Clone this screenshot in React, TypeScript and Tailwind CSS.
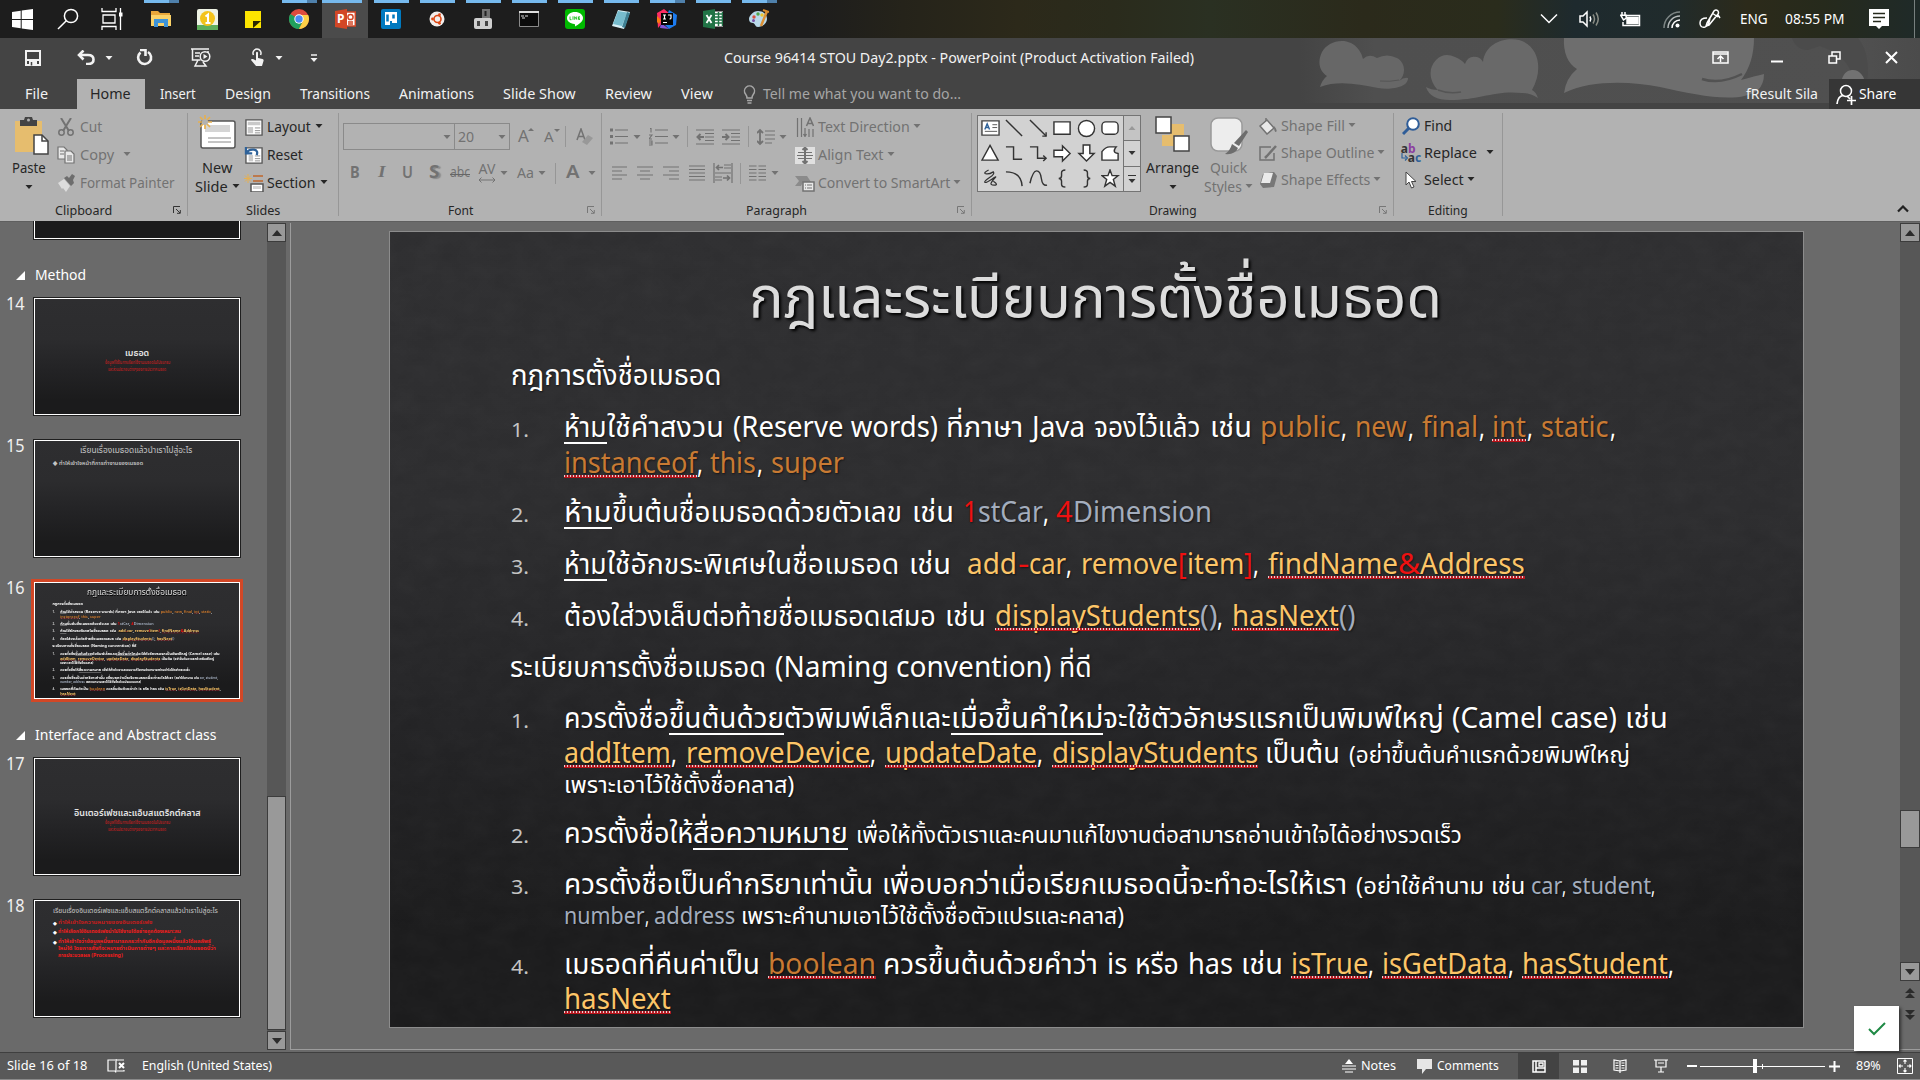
import React, { useLayoutEffect, useRef, useState } from "react";

type Kids = { children?: React.ReactNode };

/* Text condensed or stretched to a fixed advance width. */
function Fit({ w, className = "", children }: { w: number; className?: string } & Kids) {
  const ref = useRef<HTMLSpanElement>(null);
  const [k, setK] = useState(1);
  useLayoutEffect(() => {
    const n = ref.current?.offsetWidth ?? 0;
    if (n > 0) setK(w / n);
  }, [w, children]);
  return (
    <span className={"inline-block shrink-0 whitespace-pre " + className} style={{ width: w }}>
      <span ref={ref} className="inline-block origin-left" style={{ transform: `translateY(-1px) scaleX(${k})` }}>
        {children}
      </span>
    </span>
  );
}

function Caret({ className = "" }: { className?: string }) {
  return (
    <svg className={"shrink-0 " + className} width="8" height="4" viewBox="0 0 8 4" fill="currentColor">
      <path d="M0.5 0h7L4 4z" />
    </svg>
  );
}

function Ico({ w, h, vw, vh, className = "", children }: { w: number; h: number; vw?: number; vh?: number; className?: string } & Kids) {
  return (
    <svg className={"shrink-0 " + className} width={w} height={h} viewBox={`0 0 ${vw ?? w} ${vh ?? h}`} fill="none" stroke="currentColor" strokeWidth="1.5">
      {children}
    </svg>
  );
}

/* ---------------------------------------------------------------- taskbar */

function Task({ bar, active, children }: { bar?: "one" | "many"; active?: boolean } & Kids) {
  return (
    <div className={"relative flex h-[38px] w-[46px] shrink-0 items-center justify-center " + (active ? "bg-[#4b4b4b]" : "")}>
      {bar && (
        <div className={"absolute top-0 flex h-[3px] " + (active ? "left-0 w-[40px]" : "left-[6px] w-[35px]")}>
          <div className="h-full flex-1 bg-[#76b9ed]" />
          {bar === "many" && <div className="h-full w-[10px] bg-[#4f80ab]" />}
        </div>
      )}
      {children}
    </div>
  );
}

function Taskbar() {
  return (
    <div className="flex h-[38px] shrink-0 items-center bg-[linear-gradient(90deg,#1d1d1d_0%,#1d1d1d_42%,#25231a_47%,#2c291a_53%,#2a2b1c_58%,#2a3022_63%,#2b2a1b_71%,#2a2c1c_78%,#1e2a2e_82%,#202b2c_87%,#2c2a1a_91%,#262a1c_95%,#1f2a29_100%)] text-white">
      <div className="flex w-[45px] justify-center">
        <Ico w={21} h={21} className="text-white">
          <path stroke="none" fill="currentColor" d="M0 3l8.7-1.2v8.3H0zM9.7 1.6L21 0v10.1H9.7zM0 11h8.7v8.2L0 18zM9.7 11H21v10L9.7 19.4z" />
        </Ico>
      </div>
      <div className="flex w-[45px] justify-center">
        <Ico w={22} h={22}><circle cx="14" cy="8" r="6.6" /><path d="M9.3 12.7L1 21" /></Ico>
      </div>
      <div className="mr-1 flex w-[44px] justify-center">
        <Ico w={22} h={22}><path d="M1 0v3.5h14V0M1 22v-3.5h14V22M2 7h12v8H2zM19.5 0v22" strokeWidth="1.3" /><path d="M18 6.5h3.5" strokeWidth="4" /></Ico>
      </div>
      <Task bar="many">
        <Ico w={20} h={18}><g stroke="none"><path fill="#e9a73a" d="M0 1h7l2 2h10v13H0z" /><path fill="#fbd268" d="M0 5h20v11H0z" /><path fill="#3f94d8" d="M3 9h14v8h-4v-4H7v4H3z" /></g></Ico>
      </Task>
      <Task>
        <Ico w={21} h={21}><g stroke="none"><rect width="21" height="21" rx="2" fill="#eef3e4" /><path d="M0 16h21v5H0z" fill="#5fae5c" /><circle cx="10.5" cy="9.5" r="7.5" fill="#f3c31b" /></g><path d="M8.5 7.5l2.500-2v8.500M8.500 14h5" stroke="#fff" strokeWidth="2" /></Ico>
      </Task>
      <Task>
        <Ico w={16} h={17}><path stroke="none" fill="#fde500" d="M0 0h16v17H0z" /><path stroke="none" fill="#2a2700" d="M8 17v-7h8z" /></Ico>
      </Task>
      <Task bar="many">
        <Ico w={20} h={20}><g stroke="none"><circle cx="10" cy="10" r="10" fill="#dd4b3e" /><path fill="#20a05e" d="M10 10L1.300 5A10 10 0 0 0 10 20l4-8z" /><path fill="#fdd046" d="M10 6h9.200A10 10 0 0 1 10 20l4-8z" /><circle cx="10" cy="10" r="4.700" fill="#fff" /><circle cx="10" cy="10" r="3.700" fill="#4a8af4" /></g></Ico>
      </Task>
      <Task bar="one" active>
        <Ico w={21} h={20}><path stroke="none" fill="#fff" d="M11 3h9v14h-9z" /><path d="M11 3h9.300v14H11M13 13h5M13 15h5" stroke="#d24726" /><circle cx="15.500" cy="8" r="2.600" stroke="#d24726" /><path stroke="none" fill="#d24726" d="M0 2l12-2v20L0 18z" /></Ico>
        <span className="absolute top-[11px] left-[15px] font-['Noto_Sans'] text-[12px] leading-4 font-bold">P</span>
      </Task>
      <Task bar="one">
        <Ico w={20} h={20}><rect width="20" height="20" rx="2" fill="#0079bf" stroke="none" /><path stroke="none" fill="#fff" d="M4 3h12v11h-5v-2H9v4H4z" /><path d="M6.500 5.500v7M12.500 5.500v4" stroke="#0079bf" strokeWidth="2.500" /></Ico>
      </Task>
      <Task bar="one">
        <Ico w={16} h={16}><circle cx="8" cy="8" r="7.500" fill="#f3efed" stroke="none" /><circle cx="8.500" cy="8" r="3.500" stroke="#dd4814" strokeWidth="1.600" /><g fill="#dd4814" stroke="none"><circle cx="3.500" cy="8" r="1.400" /><circle cx="10.500" cy="3.700" r="1.400" /><circle cx="10.500" cy="12.300" r="1.400" /></g></Ico>
      </Task>
      <Task bar="one">
        <Ico w={18} h={20}><g stroke="none"><path fill="#737373" d="M8 0h8v10H8z" /><path fill="#222" d="M10.500 2h2v5h-2z" /><rect y="9" width="18" height="11" rx="2" fill="#cfcfcf" /><path fill="#454545" d="M3 12h3v5H3zM11 12h3v5h-3z" /></g></Ico>
      </Task>
      <Task bar="one">
        <Ico w={20} h={16}><path d="M.5.500h19v15H.5z" fill="#0b0b0b" stroke="#8a8a8a" strokeWidth="1" /><path d="M0 1h20" stroke="#ddd" strokeWidth="2" /><path d="M2 5h3M6 5h3M3 7h3" stroke="#ddd" strokeWidth="1" /></Ico>
      </Task>
      <Task bar="one">
        <Ico w={20} h={20}><rect width="20" height="20" rx="3" fill="#00b900" stroke="none" /><path stroke="none" fill="#fff" d="M10 3c4.500 0 8 2.700 8 6 0 4-5 6.500-8 8.500 0-1 .4-2-.5-2.500C5 14.500 2 12.400 2 9c0-3.300 3.500-6 8-6z" /><path d="M5 7.500v3.200h1.500M8 7.300v3.500M9.700 10.800V7.700l2 2.700V7.500M15 7.800h-1.500v2.700H15M13.500 9.200H15" stroke="#00b900" strokeWidth=".8" /></Ico>
      </Task>
      <Task bar="one">
        <Ico w={18} h={19}><g stroke="none"><path fill="#d9f0f6" d="M6 0l12 2-6 17L0 16z" /><path fill="#77bccd" d="M6 1l9 1.500L10 16 1 14z" /><path fill="#3f8194" d="M15 2l3 1-5 15-3-1z" /></g></Ico>
      </Task>
      <Task bar="many">
        <Ico w={20} h={20}><g stroke="none"><path fill="#fe2d63" d="M0 4l7-4 6 5-7 8-5 6z" /><path fill="#f97a12" d="M0 7l4 4-2 4-2-2z" /><path fill="#1c7bef" d="M12 1l8 5-1 10-7 4-5-5z" /><path fill="#8054d8" d="M4 14l8 6-9-1z" /><path fill="#060606" d="M4 4h12v12H4z" /></g><path d="M6 6h3M7.500 6v4M6 10h3M11 6h3v3q0 1-1.500 1M6 13.500h4" stroke="#fff" strokeWidth="1.200" /></Ico>
      </Task>
      <Task bar="one">
        <Ico w={20} h={20}><path stroke="none" fill="#fff" d="M11 2.500h9v15h-9z" /><path d="M12 5h7M12 8h7M12 11h7M12 14h7M15.500 3v14M19.500 3v14" stroke="#217346" /><path stroke="none" fill="#217346" d="M0 2l12-2v20L0 18z" /><path d="M3.500 6l5 8M8.500 6l-5 8" stroke="#fff" strokeWidth="1.800" /></Ico>
      </Task>
      <Task bar="many">
        <Ico w={20} h={20}><g stroke="none"><path fill="#b9d9ea" d="M9 2c6 0 9 4 9 8s-4 8-9 8c-3 0-3-4-5-4s-4-1-4-4 4-8 9-8z" /><circle cx="5" cy="8" r="1.700" fill="#d94f3d" /><circle cx="9" cy="5" r="1.700" fill="#50a54b" /><circle cx="13" cy="6" r="1.700" fill="#edc52c" /><circle cx="4.500" cy="11.500" r="1.500" fill="#7550a5" /></g><path d="M18 2l-6 15" stroke="#db9136" strokeWidth="2.500" /><path d="M14 1l6 2" stroke="#d68a2c" strokeWidth="2" /></Ico>
      </Task>

      <div className="ml-auto flex items-center">
        <Ico w={18} h={12} className="mr-[21px]"><path d="M1 1.500l8 8 8-8" /></Ico>
        <Ico w={22} h={18} className="mr-[19px]"><path d="M1 6h3l4-4v14l-4-4H1z" /><path d="M11 6.500q1.500 2.500 0 5" /><path d="M14 4.500q3 4.500 0 9M17 2.500q4.500 6.500 0 13" stroke="#8a8d85" /></Ico>
        <Ico w={21} h={15} className="mr-[22px]"><path d="M5 3.500h14.500v10H3V10M2 0v3M5 0v3M.7 3.200h5.500V6L3.500 8z" /><path d="M7 5.500h11v6H7z" fill="currentColor" /></Ico>
        <Ico w={17} h={17} className="mr-[19px]"><path d="M1 17A16 16 0 0 1 17 1" stroke="#7d8685" /><path d="M5 17A12 12 0 0 1 17 5" stroke="#b7bcbc" /><path d="M9 17a8 8 0 0 1 8-8" /><circle cx="14.500" cy="14.500" r="2" fill="currentColor" stroke="none" /></Ico>
        <Ico w={22} h={20} className="mr-[19px]"><path d="M8 14L15 2q2-2 4 0 1 2 0 3L10 16l-3 1zM13 4l6 4M8 9q-7 0-7 5t5 4q4-1 5-9M19 6l2 3" /></Ico>
        <Fit w={28} className="mt-[2px] mr-[17px] text-[14px] leading-5">ENG</Fit>
        <Fit w={60} className="mt-[2px] mr-[24px] text-[14px] leading-5">08:55 PM</Fit>
        <Ico w={20} h={20} className="mr-[25px]"><path stroke="none" fill="#fff" d="M0 0h20v17h-7l-3 3-3-3H0z" /><path d="M4 4.500h12M4 8.500h12M4 12.500h8" stroke="#262a1c" /></Ico>
        <div className="mr-[5px] h-[38px] w-px bg-[#77807f]" />
      </div>
    </div>
  );
}

/* -------------------------------------------------------------- title bar */

function Clouds() {
  return (
    <svg className="absolute top-0 right-0" width="620" height="71" viewBox="0 0 620 71">
      <defs>
        <linearGradient id="fade" x1="0" x2="1"><stop offset="0" stopColor="#444" /><stop offset=".12" stopColor="#4f4f4f" /><stop offset=".9" stopColor="#505050" /><stop offset="1" stopColor="#4b4b4b" /></linearGradient>
      </defs>
      <rect width="620" height="65" fill="url(#fade)" />
      <path fill="#676767" d="M20 49q2-7 7-11C18 32 18 22 22 14 28 3 48-3 59 12q3 4 4 9 6-6 14-1 10-5 20 0c9 5 9 17 2 23q5-4 9-3c0 10-18 12-30 10C58 46 38 42 20 49z" />
      <path stroke="#555" fill="none" d="M80 43q10 1 19-1" />
      <path fill="#696969" d="M126 49q5 3 12 3C129 43 128 30 136 22q8-8 19-3 7 3 10 7 3-9 12-7 4 1 6 5C185 5 205-1 219 2c21 6 24 31 13 50q4 2 6 8-8-5-16-5c-27-3-42 7-72 7q-20 0-24-13z" />
      <path stroke="#555" strokeWidth="1.500" fill="none" d="M138 52q10 4 23 2" />
      <path fill="#6e6e6e" d="M264 0c-1 14 4 26 13 31q-11 9-13 24c26-13 66-12 96-6 40 9 80 17 98 3q6-6 6-16-9 2-23 6 13-17 13-42z" />
      <path stroke="#525252" strokeWidth="2.500" fill="none" d="M402 41q18 6 40-5" />
      <path fill="#4a4a4a" d="M492 0q4 12 16 12l12-4 10 4c10 6 20 14 22 26l-11 12h25c4-18 2-38-8-50z" opacity=".8" />
      <path fill="#727272" d="M541 50c0-14 6-18 12-18s13 6 12 17l24 9-53-1z" />
    </svg>
  );
}

function TitleBar() {
  return (
    <div className="relative flex h-[39px] items-center text-[#f2f2f2]">
      <Ico w={16} h={16} className="ml-[25px]" ><path d="M1 1h14v14H1zM1 10h14" strokeWidth="2" /><path stroke="none" fill="currentColor" d="M4 10h8v6H4z" /><path stroke="#444" d="M6.500 12v3.500" /></Ico>
      <Ico w={18} h={15} className="ml-[36px]"><path d="M2 5h9q5.500 0 5.500 4.500T11 14H9" strokeWidth="2.600" /><path d="M6.500.500L2 5l4.500 4.500" strokeWidth="2.600" /></Ico>
      <Caret className="ml-[10px]" />
      <Ico w={17} h={17} className="ml-[23px]"><path d="M4.500 3.500A6.500 6.500 0 1 0 12 3" strokeWidth="2.600" /><path d="M4 1h5.500v6" strokeWidth="2.600" /></Ico>
      <Ico w={21} h={19} className="ml-[38px]"><path d="M0 1h18M1.500 1v11h8M17 3v2M4 5h5M4 8h4M7 12l-3 6h11l-3-4" /><circle cx="14" cy="8.500" r="4.800" /><path d="M12.500 6v5l4-2.500z" fill="currentColor" stroke="none" /></Ico>
      <Ico w={15} h={19} vh={17} className="ml-[38px]"><path d="M3.500 6a4 4 0 1 1 7 0" /><path stroke="none" fill="currentColor" d="M6 3.500q1-1.500 2 0V9l4.500 1q1.500.5 1 2L12 17H6L1 11q0-1.500 2-1l3 1.500z" /></Ico>
      <Caret className="ml-[10px]" />
      <Ico w={8} h={8} className="ml-[27px]"><path d="M1 1h6" /><path d="M.5 4h7L4 8z" fill="currentColor" stroke="none" /></Ico>
      <Fit w={470} className="ml-[406px] text-[14.500px] leading-5">Course 96414 STOU Day2.pptx - PowerPoint (Product Activation Failed)</Fit>
      <div className="relative ml-auto flex items-center text-white">
        <Ico w={17} h={13} className="mr-[42px]"><path d="M1 1h15v11H1zM1 3h15M8.500 11V5.500M5.500 8l3-3 3 3" /></Ico>
        <Ico w={13} h={13} className="mr-[44px]"><path d="M0 10.500h12" strokeWidth="2" /></Ico>
        <Ico w={13} h={13} className="mr-[44px]"><path d="M1 5h7.500v7H1zM4 5V1h8v7H8.500" /></Ico>
        <Ico w={13} h={13} className="mr-[22px]"><path d="M1 1l11 11M12 1L1 12" strokeWidth="2" /></Ico>
      </div>
    </div>
  );
}

const TABS: [string, number, string][] = [
  ["Insert", 36, "ml-[15px]"],
  ["Design", 46, "ml-[29px]"],
  ["Transitions", 70, "ml-[29px]"],
  ["Animations", 75, "ml-[29px]"],
  ["Slide Show", 73, "ml-[29px]"],
  ["Review", 47, "ml-[29px]"],
  ["View", 32, "ml-[29px]"],
];

function TabBar() {
  return (
    <div className="relative mt-[2px] flex h-[30px] items-center text-[15px] leading-5 text-[#f2f2f2]">
      <Fit w={23} className="ml-[25px]">File</Fit>
      <div className="ml-[29px] flex h-full w-[68px] items-center bg-[#b2b2b2] pl-[13px] text-[#262626]"><Fit w={41}>Home</Fit></div>
      {TABS.map(([t, w, c]) => <Fit key={t} w={w} className={c}>{t}</Fit>)}
      <Ico w={13} h={19} className="ml-[30px] text-[#a6a6a6]"><path d="M4 13q0-2-1.500-4A5 5 0 1 1 10.500 9Q9 11 9 13zM4 15.500h5M4.500 18h4" /></Ico>
      <Fit w={198} className="ml-[7px] text-[#a6a6a6]">Tell me what you want to do...</Fit>
      <Fit w={72} className="ml-auto">fResult Sila</Fit>
      <div className="ml-[11px] flex h-full w-[91px] items-center bg-[#363636] text-white">
        <Ico w={20} h={21} className="ml-[7px]"><circle cx="10" cy="7" r="5.500" /><path d="M1 20q1-8 6-8.500M11 12l3 3M15.500 12v9M11 16.500h9" strokeWidth="1.700" /></Ico>
        <Fit w={37} className="ml-[3px]">Share</Fit>
      </div>
    </div>
  );
}

/* ----------------------------------------------------------------- ribbon */

function Group({ w, label, lw, lx, launcher, children }: { w: string; label: string; lw: number; lx: string; launcher?: "on" | "off" } & Kids) {
  return (
    <div className={"relative flex h-[112px] shrink-0 flex-col " + w}>
      <div className="flex h-[90px]">{children}</div>
      <div className="flex h-[22px] items-center text-[13px] leading-5 text-[#262626]">
        <Fit w={lw} className={"mt-[2px] " + lx}>{label}</Fit>
        {launcher && (
          <Ico w={8} h={8} className={"mr-[7px] ml-auto " + (launcher === "on" ? "text-[#333]" : "text-[#777]")}><path d="M.5 7V.5H7M3 3l4 4M7.300 4v3.300H4" strokeWidth="1" /></Ico>
        )}
      </div>
      <div className="absolute top-1 right-0 h-[103px] w-px bg-[#979797]" />
    </div>
  );
}

function Cmd({ icon, label, w, caret, off, gap = "ml-[3px]" }: { icon: React.ReactNode; label: string; w: number; caret?: string; off?: boolean; gap?: string }) {
  return (
    <div className={"flex h-7 items-center text-[15px] leading-5 " + (off ? "text-[#727272]" : "text-[#262626]")}>
      <div className="flex w-5 shrink-0 justify-center">{icon}</div>
      <Fit w={w} className={gap}>{label}</Fit>
      {caret && <Caret className={"mb-[2px] " + caret} />}
    </div>
  );
}

function VSep({ className = "" }: { className?: string }) {
  return <div className={"h-[21px] w-px shrink-0 bg-[#969696] " + className} />;
}

function Lines({ d, className = "" }: { d: string; className?: string }) {
  return <Ico w={16} h={16} className={className}><path d={d} strokeWidth="1.200" /></Ico>;
}

function Clipboard() {
  return (
    <Group w="w-[188px]" label="Clipboard" lw={57} lx="ml-[55px]" launcher="on">
      <div className="flex w-[58px] flex-col items-center pt-2 text-[15px] leading-5 text-[#262626]">
        <Ico w={34} h={38} className="ml-[6px]"><g stroke="none"><path fill="#e6bd6e" d="M0 4h27v31H0z" /><path fill="#444" d="M5 3h4l1-3h7l1 3h4v6H5z" /><circle cx="13.500" cy="3" r="1.500" fill="#b2b2b2" /></g><path d="M19 18h8l6 6v13H19z" fill="#fff" stroke="#444" /><path d="M27 18v6h6" stroke="#444" /></Ico>
        <Fit w={34} className="mt-[3px]">Paste</Fit>
        <Caret className="mt-[7px]" />
      </div>
      <div className="-ml-[2px] pt-[4px]">
        <Cmd off label="Cut" w={22} gap="ml-[4px]" icon={<Ico w={16} h={18}><path d="M3 0l8 13M13 0L5 13" strokeWidth="2" /><circle cx="3.500" cy="14.500" r="2.700" /><circle cx="12.500" cy="14.500" r="2.700" /></Ico>} />
        <Cmd off label="Copy" w={34} gap="ml-[4px]" caret="ml-[9px]" icon={<Ico w={18} h={18}><path d="M1 1h6l3 3v9H1zM3 5h4M3 8h4" fill="#e8e8e8" strokeWidth="1.200" /><path d="M8 5h6l3 3v9H8zM10 10h5M10 12h5M10 14h5" fill="#e8e8e8" strokeWidth="1.200" /></Ico>} />
        <Cmd off label="Format Painter" w={95} gap="ml-[4px]" icon={<Ico w={18} h={18}><g stroke="none"><path fill="#dcdcdc" d="M1 9l6-4 6 7-4 6-3-4-1 1z" /><path fill="#6d6d6d" d="M7 4l3-2 2 2 3-4 3 2-2 4 1 3-3 3z" /></g></Ico>} />
      </div>
    </Group>
  );
}

function Slides() {
  const page = <path d="M1 1h18v17H1z" fill="#fff" stroke="#555" />;
  return (
    <Group w="w-[151px]" label="Slides" lw={34} lx="ml-[58px]">
      <div className="ml-[7px] flex w-[46px] flex-col pt-[6px] text-[15px] leading-5 text-[#262626]">
        <Ico w={38} h={34} className="ml-[3px]"><rect x="3" y="6" width="34" height="27" rx="2" fill="#fff" stroke="#555" /><path stroke="none" fill="#d5d5d5" d="M7 10h25v7H7z" /><path d="M10 23h23M10 27h23" stroke="#8a8a8a" strokeWidth="1" /><path d="M7 0v14M0 7h14M2 2l10 10M12 2L2 12" stroke="#e6b050" strokeWidth="1.700" /><circle cx="7" cy="7" r="3" fill="#b2b2b2" stroke="none" /></Ico>
        <Fit w={30} className="mt-[9px] ml-[7px]">New</Fit>
        <div className="-mt-px flex items-center"><Fit w={33}>Slide</Fit><Caret className="mb-[2px] ml-[4px]" /></div>
      </div>
      <div className="ml-[3px] pt-[4px]">
        <Cmd label="Layout" w={44} caret="ml-[4px]" icon={<Ico w={20} h={17} vh={19}>{page}<path stroke="none" fill="#c9c9c9" d="M3 3h14v4H3zM3 9h6v7H3z" /><path d="M11 10h6M11 13h6M11 15.500h6" stroke="#888" strokeWidth="1" /></Ico>} />
        <Cmd label="Reset" w={36} icon={<Ico w={20} h={17} vh={19}>{page}<path stroke="none" fill="#c9c9c9" d="M4 9h5v7H4z" /><path d="M11 10h6M11 13h6M11 15.500h6" stroke="#888" strokeWidth="1" /><path d="M2 6q3-4 8-3t3 6M1 0v7h7" stroke="#2f6299" strokeWidth="2.500" /></Ico>} />
        <Cmd label="Section" w={49} caret="ml-[4px]" icon={<Ico w={20} h={18}><path d="M9 2h10M9 7h10" stroke="#c0672b" /><path d="M7 10h12v8H7z" fill="#fff" stroke="#555" /><path stroke="none" fill="#d5d5d5" d="M9 12h8v3H9z" /><path d="M4 0v9M0 4.500h8M1 1.500l6 6M7 1.500l-6 6" stroke="#e6b050" strokeWidth="1" /></Ico>} />
      </div>
    </Group>
  );
}

function FontGroup() {
  return (
    <Group w="w-[263px]" label="Font" lw={25} lx="ml-[109px]" launcher="off">
      <div className="flex flex-col pt-[14px] text-[#727272]">
        <div className="flex h-[27px] items-center">
          <div className="ml-[4px] flex h-[27px] w-[112px] items-center justify-end border border-[#8a8a8a] pr-[3px]"><Caret /></div>
          <div className="-ml-px flex h-[27px] w-[56px] items-center border border-[#8a8a8a] pr-[3px] pl-[3px] text-[15px] leading-5"><Fit w={16}>20</Fit><Caret className="ml-auto" /></div>
          <div className="ml-[8px] flex w-[26px] items-center"><Fit w={11} className="text-[17px] leading-5">A</Fit><svg className="mb-[14px] -ml-px" width="6" height="3" fill="currentColor"><path d="M0 3h6L3 0z" /></svg></div>
          <div className="flex w-[21px] items-center"><Fit w={10} className="text-[15px] leading-5">A</Fit><svg className="mb-[12px]" width="6" height="3" fill="currentColor"><path d="M0 0h6L3 3z" /></svg></div>
          <VSep className="mr-[10px]" />
          <Ico w={18} h={18}><path d="M1 12L5 1l4 11M2.500 8.500h5" /><path stroke="none" fill="#989898" d="M6 14l6-7 5 3-6 7z" /></Ico>
        </div>
        <div className="mt-[9px] flex h-[28px] items-center leading-5">
          <Fit w={10} className="ml-[11px] text-[16px] font-bold">B</Fit>
          <Fit w={8} className="ml-[18px] font-['Liberation_Serif'] text-[17px] font-bold italic">I</Fit>
          <Fit w={11} className="ml-[16px] text-[16px] font-semibold underline">U</Fit>
          <Fit w={10} className="ml-[16px] text-[17px] font-bold [text-shadow:2px_1px_1px_#8a8a8a]">S</Fit>
          <span className="relative ml-[11px] flex"><Fit w={20} className="text-[14px]">abc</Fit><span className="absolute top-[11px] left-0 h-px w-[20px] bg-[#666]" /></span>
          <div className="ml-[8px] flex flex-col items-center"><Fit w={17} className="text-[14px] leading-[14px]">AV</Fit><Ico w={18} h={6}><path d="M1 3h16M3.500.500L1 3l2.500 2.500M14.500.500L17 3l-2.500 2.500" strokeWidth="1" /></Ico></div>
          <Caret className="ml-[4px]" />
          <Fit w={17} className="ml-[9px] text-[15px]">Aa</Fit>
          <Caret className="ml-[4px]" />
          <VSep className="ml-[9px]" />
          <Fit w={13} className="ml-[10px] text-[17px] font-semibold">A</Fit>
          <Caret className="ml-[9px]" />
        </div>
      </div>
    </Group>
  );
}

function Paragraph() {
  return (
    <Group w="w-[370px]" label="Paragraph" lw={61} lx="ml-[144px]" launcher="off">
      <div className="flex w-[193px] flex-col pt-[14px] text-[#727272]">
        <div className="flex h-[27px] items-center">
          <Ico w={18} h={17} className="ml-[8px]"><path d="M5 2h13M5 8.500h13M5 15h13" strokeWidth="1.200" /><path d="M0 2h3M0 8.500h3M0 15h3" strokeWidth="3" /></Ico>
          <Caret className="ml-[5px]" />
          <Ico w={19} h={19} className="ml-[8px]"><path d="M6 3h13M6 9.500h13M6 16h13M1 1.500h1v4M0 8h3l-3 4h3M0 14h3v4H0M0 16h3" strokeWidth="1.100" /></Ico>
          <Caret className="ml-[4px]" />
          <VSep className="ml-[7px]" />
          <Ico w={18} h={16} className="ml-[8px]"><path d="M0 1h18M9 4.500h9M9 8h9M9 11.500h9M0 15h18" strokeWidth="1.200" /><path d="M8 8H2M4.500 5L1.500 8l3 3" strokeWidth="2" /></Ico>
          <Ico w={18} h={16} className="ml-[8px]"><path d="M0 1h18M9 4.500h9M9 8h9M9 11.500h9M0 15h18" strokeWidth="1.200" /><path d="M0 8h6M3.500 5l3 3-3 3" strokeWidth="2" /></Ico>
          <VSep className="ml-[8px]" />
          <Ico w={18} h={18} className="ml-[8px]"><path d="M8 3h10M8 7h10M8 11h10M8 15h7" strokeWidth="1.200" /><path d="M3 2v14M0 5l3-3 3 3M0 13l3 3 3-3" strokeWidth="1.800" /></Ico>
          <Caret className="ml-[4px]" />
        </div>
        <div className="mt-[9px] flex h-[28px] items-center">
          <Lines className="ml-[9px]" d="M1 2h15M1 6h10M1 10h15M1 14h10" />
          <Lines className="ml-[10px]" d="M0 2h16M3 6h10M0 10h16M3 14h10" />
          <Lines className="ml-[10px]" d="M0 2h16M6 6h10M0 10h16M6 14h10" />
          <Lines className="ml-[10px]" d="M0 1h16M0 4.500h16M0 8h16M0 11.500h16M0 15h16" />
          <Ico w={20} h={20} className="ml-[8px]"><path d="M1 0v20M19 0v20M11 2h7M11 5h7M2 10h16M2 14h7M2 17h7" strokeWidth="1.200" /><path d="M10 4.500H4M6 2L3.500 4.500 6 7M10 15h6M14 12.500l2.500 2.500-2.500 2.500" strokeWidth="1.700" /></Ico>
          <VSep className="ml-[7px]" />
          <Ico w={17} h={16} className="ml-[8px]"><path d="M0 1h7.500M0 4.500h7.500M0 8h7.500M0 11.500h7.500M0 15h7.500M9.500 1H17M9.500 4.500H17M9.500 8H17M9.500 11.500H17M9.500 15H17" strokeWidth="1.200" /></Ico>
          <Caret className="ml-[5px]" />
        </div>
      </div>
      <div className="pt-[4px]">
        <Cmd off label="Text Direction" w={92} caret="ml-[3px]" icon={<Ico w={18} h={20}><path d="M1.500 1v19M5.500 1v19M13 12v8M17 12v8" strokeWidth="1.200" /><path d="M9 11v9M7.500 17L9 19.500l1.500-2.500" strokeWidth="1.200" /><path d="M10.500 9L14 1l3.500 8M12 6.500h4" /></Ico>} />
        <Cmd off label="Align Text" w={66} caret="ml-[3px]" icon={<Ico w={20} h={17}><path stroke="none" fill="#e0e0e0" d="M0 0h20v17H0z" /><path d="M2 8.500h16M3 5.500h14M3 11.500h14" strokeWidth="1" /><path d="M10 0v17M7.500 3L10 .5 12.500 3M7.500 14l2.500 2.500 2.500-2.500" strokeWidth="2" /></Ico>} />
        <Cmd off label="Convert to SmartArt" w={132} caret="ml-[3px]" icon={<Ico w={20} h={18}><path stroke="none" fill="#8b8b8b" d="M0 2h12l4 6H8l-2 4H0l4-5z" /><path d="M8 8h11v9H8z" fill="#e8e8e8" /><path d="M10 11h1M12 11h5M10 14h1M12 14h5" strokeWidth="1" /></Ico>} />
      </div>
    </Group>
  );
}

const SHAPES: React.ReactNode[] = [
  <><path d="M1 2h18v15H1z" fill="#fff" stroke="#444" /><path d="M12 6h5M12 9h5M4 13h13" stroke="#555" strokeWidth="1" /><path d="M4 11l2.500-6L9 11M5 9h3" stroke="#2f6299" /></>,
  <path d="M1 1l17 17" />,
  <><path d="M1 1l17 17" /><path d="M18 14v4h-4" /></>,
  <path d="M1 3h17v13H1z" fill="#fff" />,
  <circle cx="10" cy="10" r="8.500" fill="#fff" />,
  <rect x="1" y="3" width="17" height="13" rx="4" fill="#fff" />,
  <path d="M9.500 1.500L18 17H1z" fill="#fff" />,
  <path d="M1 3h8v13h9" />,
  <><path d="M1 3h8v12h9" /><path d="M15 12l3 3-3 3" /></>,
  <path d="M1 6.500h9V2l8 8-8 8v-4.500H1z" fill="#fff" />,
  <path d="M6.500 1h7v9H18l-8 8-8-8h4.500z" fill="#fff" />,
  <path d="M1 17V8q4-5 8-5h7q-5 6 2 7v7z" fill="#fff" />,
  <path d="M8 1q-6 3-3 4t8-2q2 2-4 6t-5 5 7-3 4-2-4 5 3 3-1-4" strokeWidth="1.300" />,
  <path d="M1 3q16 0 17 15" />,
  <path d="M1 15Q4 2 8 2t5 8 6 7" />,
  <path d="M13 1q-4 0-4 3v3q0 3-3 3 3 0 3 3v3q0 3 4 3" />,
  <path d="M7 1q4 0 4 3v3q0 3 3 3-3 0-3 3v3q0 3-4 3" />,
  <path d="M9.500 1l2.200 6H18l-5 4 2 7-5.500-4L4 18l2-7-5-4h6.300z" fill="#fff" />,
];

function Drawing() {
  return (
    <Group w="w-[422px]" label="Drawing" lw={48} lx="ml-[177px]" launcher="off">
      <div className="mt-[6px] ml-[5px] flex h-[77px] w-[164px] border border-[#747474] bg-[#d2d2d2] text-[#333]">
        <div className="grid w-[145px] grid-cols-6 grid-rows-3 place-items-center">
          {SHAPES.map((s, i) => <Ico key={i} w={19} h={19} vw={20} vh={20}>{s}</Ico>)}
        </div>
        <div className="flex flex-1 flex-col border-l border-[#747474]">
          <div className="flex flex-1 items-center justify-center bg-[#c4c4c4] text-[#999]"><Caret className="rotate-180" /></div>
          <div className="flex flex-1 items-center justify-center border-y border-[#747474]"><Caret /></div>
          <div className="flex flex-1 flex-col items-center justify-center gap-[3px]"><div className="h-px w-2 bg-[#333]" /><Caret /></div>
        </div>
      </div>
      <div className="ml-[5px] flex w-[53px] flex-col items-center pt-[7px] text-[15px] leading-5 text-[#262626]">
        <Ico w={35} h={36}><path stroke="none" fill="#e6bd6e" d="M15 8h14v11H15zM7 19h12v11H7z" /><path d="M1 1h15v16H1zM19 20h15v15H19z" fill="#fff" stroke="#444" /></Ico>
        <Fit w={53} className="mt-[6px]">Arrange</Fit>
        <Caret className="mt-[7px]" />
      </div>
      <div className="ml-[5px] flex w-[54px] flex-col pt-[8px] text-[15px] leading-5 text-[#727272]">
        <Ico w={38} h={38} className="ml-[6px]"><rect x="1" y="1" width="31" height="33" rx="7" fill="#ededed" stroke="#999" /><path stroke="none" fill="#6d6d6d" d="M36 13l2 2-9 14-5-3z" /><path stroke="none" fill="#6d6d6d" d="M22 27l6 4q-3 7-13 6 5-3 7-10z" /></Ico>
        <Fit w={37} className="ml-[6px] mt-[3px]">Quick</Fit>
        <div className="-mt-px flex items-center"><Fit w={38}>Styles</Fit><Caret className="mb-[2px] ml-[3px]" /></div>
      </div>
      <div className="pt-[3px]">
        <div className="h-[27px]"><Cmd off label="Shape Fill" w={64} caret="ml-[3px]" icon={<Ico w={18} h={18}><path d="M7 1v5" /><path d="M1 9l7-6 7 8-7 6z" fill="#e8e8e8" /><path d="M15 9q4 4 2 6-2 0-2-6z" fill="currentColor" stroke="none" /></Ico>} /></div>
        <div className="h-[27px]"><Cmd off label="Shape Outline" w={93} caret="ml-[3px]" icon={<Ico w={18} h={16}><path d="M12 2H1v13h14V8" /><path d="M17 1L8 11l-2 2" strokeWidth="2.500" /></Ico>} /></div>
        <div className="h-[27px]"><Cmd off label="Shape Effects" w={89} caret="ml-[3px]" icon={<Ico w={18} h={18}><g stroke="none"><path fill="#777" d="M4 3l11-2 3 4-3 11-11 1-3-4z" /><path fill="#eaeaea" d="M5 2h9l-3 10H2z" /></g></Ico>} /></div>
      </div>
    </Group>
  );
}

function Editing() {
  return (
    <Group w="w-[109px]" label="Editing" lw={40} lx="ml-[34px]">
      <div className="ml-[7px] pt-[3px]">
        <div className="h-[27px]"><Cmd label="Find" w={28} icon={<Ico w={18} h={20} vh={18}><circle cx="11" cy="7" r="5.800" fill="#fff" stroke="#2f5d98" strokeWidth="2" /><path d="M7 11l-6 6" stroke="#2f5d98" strokeWidth="3" /></Ico>} /></div>
        <div className="h-[27px]"><Cmd label="Replace" w={53} caret="ml-[9px]" icon={
          <div className="flex flex-col text-[12px] leading-[9px] font-bold">
            <span><span className="text-[#333]">a</span><span className="text-[#8a3fa0]">b</span></span>
            <span className="flex"><Ico w={7} h={8}><path d="M1 0v5h4M4 2.500L6.500 5 4 7.500" stroke="#2f6299" strokeWidth="1.200" /></Ico><span className="text-[#333]">a</span><span className="text-[#2f6299]">c</span></span>
          </div>} /></div>
        <div className="h-[27px]"><Cmd label="Select" w={40} caret="ml-[3px]" icon={<Ico w={12} h={18}><path d="M1 1v13l3-3 2.500 6 2.500-1-2.500-5.500H11z" fill="#fff" stroke="#444" strokeWidth="1" /></Ico>} /></div>
      </div>
    </Group>
  );
}

/* ------------------------------------------------------------ main slide */

type Run = { a: number; b: number; t: string; c?: "k" | "y" | "g" | "r"; u?: boolean; z?: boolean; s?: boolean };
type Line = { h: string; n?: string; runs: Run[] };

const O = 511;
const co = (a: number, s?: boolean): Run => ({ a: a + 1, b: a + (s ? 5 : 7), t: ",", s });

const LINES: Line[] = [
  { h: "h-[36px]", runs: [{ a: 511, b: 721, t: "กฎการตั้งชื่อเมธอด" }] },
  { h: "h-[52px]", n: "1.", runs: [{ a: 564, b: 607, t: "ห้าม", u: true }, { a: 607, b: 724, t: "ใช้คำสงวน" }, { a: 733, b: 938, t: "(Reserve words)" }, { a: 946, b: 1023, t: "ที่ภาษา" }, { a: 1032, b: 1085, t: "Java" }, { a: 1094, b: 1200, t: "จองไว้แล้ว" }, { a: 1210, b: 1252, t: "เช่น" }, { a: 1260, b: 1340, t: "public", c: "k" }, co(1340), { a: 1355, b: 1407, t: "new", c: "k" }, co(1407), { a: 1422, b: 1478, t: "final", c: "k" }, co(1478), { a: 1492, b: 1526, t: "int", c: "k", z: true }, co(1526), { a: 1541, b: 1609, t: "static", c: "k" }, co(1609)] },
  { h: "h-[36px]", runs: [{ a: 564, b: 697, t: "instanceof", c: "k", z: true }, co(696), { a: 710, b: 756, t: "this", c: "k" }, co(756), { a: 771, b: 844, t: "super", c: "k" }] },
  { h: "h-[49px]", n: "2.", runs: [{ a: 564, b: 612, t: "ห้าม", u: true }, { a: 612, b: 902, t: "ขึ้นต้นชื่อเมธอดด้วยตัวเลข" }, { a: 912, b: 954, t: "เช่น" }, { a: 963, b: 978, t: "1", c: "r" }, { a: 978, b: 1043, t: "stCar", c: "g" }, co(1042), { a: 1056, b: 1073, t: "4", c: "r" }, { a: 1073, b: 1212, t: "Dimension", c: "g" }] },
  { h: "h-[52px]", n: "3.", runs: [{ a: 564, b: 607, t: "ห้าม", u: true }, { a: 607, b: 899, t: "ใช้อักขระพิเศษในชื่อเมธอด" }, { a: 909, b: 951, t: "เช่น" }, { a: 967, b: 1017, t: "add", c: "y" }, { a: 1018, b: 1029, t: "-", c: "r" }, { a: 1029, b: 1066, t: "car", c: "y" }, co(1065), { a: 1081, b: 1178, t: "remove", c: "y" }, { a: 1178, b: 1187, t: "[", c: "r" }, { a: 1187, b: 1244, t: "item", c: "y" }, { a: 1244, b: 1253, t: "]", c: "r" }, co(1252), { a: 1268, b: 1398, t: "findName", c: "y", z: true }, { a: 1398, b: 1420, t: "&", c: "r", z: true }, { a: 1420, b: 1525, t: "Address", c: "y", z: true }] },
  { h: "h-[52px]", n: "4.", runs: [{ a: 564, b: 936, t: "ต้องใส่วงเล็บต่อท้ายชื่อเมธอดเสมอ" }, { a: 945, b: 986, t: "เช่น" }, { a: 995, b: 1200, t: "displayStudents", c: "y", z: true }, { a: 1200, b: 1217, t: "()", c: "g" }, co(1216), { a: 1232, b: 1339, t: "hasNext", c: "y", z: true }, { a: 1339, b: 1355, t: "()", c: "g" }] },
  { h: "h-[51px]", runs: [{ a: 510, b: 766, t: "ระเบียบการตั้งชื่อเมธอด" }, { a: 775, b: 1051, t: "(Naming convention)" }, { a: 1059, b: 1092, t: "ที่ดี" }] },
  { h: "h-[51px]", n: "1.", runs: [{ a: 564, b: 669, t: "ควรตั้งชื่อ" }, { a: 669, b: 784, t: "ขึ้นต้นด้วย", u: true }, { a: 784, b: 951, t: "ตัวพิมพ์เล็กและ" }, { a: 951, b: 1103, t: "เมื่อขึ้นคำใหม่", u: true }, { a: 1103, b: 1444, t: "จะใช้ตัวอักษรแรกเป็นพิมพ์ใหญ่" }, { a: 1452, b: 1617, t: "(Camel case)" }, { a: 1625, b: 1668, t: "เช่น" }] },
  { h: "h-[35px]", runs: [{ a: 564, b: 671, t: "addItem", c: "y", z: true }, co(670), { a: 686, b: 870, t: "removeDevice", c: "y", z: true }, co(869), { a: 885, b: 1037, t: "updateDate", c: "y", z: true }, co(1036), { a: 1052, b: 1258, t: "displayStudents", c: "y", z: true }, { a: 1265, b: 1340, t: "เป็นต้น" }, { a: 1349, b: 1630, t: "(อย่าขึ้นต้นคำแรกด้วยพิมพ์ใหญ่", s: true }] },
  { h: "h-[30px]", runs: [{ a: 564, b: 794, t: "เพราะเอาไว้ใช้ตั้งชื่อคลาส)", s: true }] },
  { h: "h-[50px]", n: "2.", runs: [{ a: 564, b: 693, t: "ควรตั้งชื่อให้" }, { a: 693, b: 848, t: "สื่อความหมาย", u: true }, { a: 856, b: 1462, t: "เพื่อให้ทั้งตัวเราและคนมาแก้ไขงานต่อสามารถอ่านเข้าใจได้อย่างรวดเร็ว", s: true }] },
  { h: "h-[51px]", n: "3.", runs: [{ a: 564, b: 873, t: "ควรตั้งชื่อเป็นคำกริยาเท่านั้น" }, { a: 882, b: 1347, t: "เพื่อบอกว่าเมื่อเรียกเมธอดนี้จะทำอะไรให้เรา" }, { a: 1356, b: 1484, t: "(อย่าใช้คำนาม", s: true }, { a: 1491, b: 1525, t: "เช่น", s: true }, { a: 1531, b: 1562, t: "car", c: "g", s: true }, co(1561, true), { a: 1572, b: 1651, t: "student", c: "g", s: true }, co(1650, true)] },
  { h: "h-[30px]", runs: [{ a: 564, b: 645, t: "number", c: "g", s: true }, co(644, true), { a: 654, b: 735, t: "address", c: "g", s: true }, { a: 741, b: 1124, t: "เพราะคำนามเอาไว้ใช้ตั้งชื่อตัวแปรและคลาส)", s: true }] },
  { h: "h-[50px]", n: "4.", runs: [{ a: 564, b: 760, t: "เมธอดที่คืนค่าเป็น" }, { a: 768, b: 876, t: "boolean", c: "k", z: true }, { a: 883, b: 1098, t: "ควรขึ้นต้นด้วยคำว่า" }, { a: 1107, b: 1127, t: "is" }, { a: 1135, b: 1179, t: "หรือ" }, { a: 1188, b: 1233, t: "has" }, { a: 1241, b: 1283, t: "เช่น" }, { a: 1291, b: 1368, t: "isTrue", c: "y", z: true }, co(1367), { a: 1382, b: 1508, t: "isGetData", c: "y", z: true }, co(1507), { a: 1522, b: 1668, t: "hasStudent", c: "y", z: true }, co(1667)] },
  { h: "h-[35px]", runs: [{ a: 564, b: 671, t: "hasNext", c: "y", z: true }] },
];

const COLORS = { k: "text-[#c87a33]", y: "text-[#fcc568]", g: "text-[#a3adbd]", r: "text-[#ee1111]" };

function LineRow({ line }: { line: Line }) {
  let pen = line.n ? O + 18 : O;
  return (
    <div className={"flex shrink-0 items-end " + line.h}>
      <div className="flex h-[36px] items-baseline text-[29px] leading-[36px] text-white">
        {line.n && <Fit w={18} className="text-[19px] text-[#c4c4c4]">{line.n}</Fit>}
        {line.runs.map((r, i) => {
          const gap = r.a - pen;
          pen = r.b;
          return (
            <span key={i} className="relative shrink-0" style={{ marginLeft: gap }}>
              <Fit w={r.b - r.a} className={"[text-shadow:1px_1px_2px_#0008] " + (r.s ? "text-[23px] " : "") + (r.c ? COLORS[r.c] : "")}>{r.t}</Fit>
              {r.u && <span className="absolute bottom-px left-0 h-[2px] w-full bg-white" />}
              {r.z && (
                <span className="absolute bottom-[3px] left-0 flex h-[3px] w-full flex-col">
                  <span className="h-[2px] bg-[repeating-linear-gradient(90deg,#f0d0d0_0_1px,#b0202a_1px_3px)]" />
                  <span className="h-px bg-[#b81218]" />
                </span>
              )}
            </span>
          );
        })}
      </div>
    </div>
  );
}

const SLIDE_BG = "bg-[linear-gradient(180deg,#2e2e30_0%,#2c2c2e_35%,#232325_62%,#1b1b1c_88%,#1b1b1c_100%)]";

function Grain() {
  return (
    <svg className="absolute inset-0 h-full w-full opacity-[0.035]">
      <filter id="grain"><feTurbulence type="fractalNoise" baseFrequency="0.04 0.06" numOctaves="5" /><feColorMatrix type="saturate" values="0" /></filter>
      <rect width="100%" height="100%" filter="url(#grain)" />
    </svg>
  );
}

function MainSlide({ mini }: { mini?: boolean }) {
  return (
    <div className={"relative h-[795px] w-[1413px] shrink-0 overflow-hidden " + SLIDE_BG + (mini ? " font-bold" : " outline outline-[#8c8c8c]")}>
      {!mini && <Grain />}
      <div className="relative flex flex-col">
        <div className="flex h-[125px] items-end pb-[11px] pl-[359px] text-[58px] leading-[100px] text-[#dcdcdc] [text-shadow:2px_2px_3px_#000]">
          <Fit w={693} className={mini ? "font-normal" : ""}>กฎและระเบียบการตั้งชื่อเมธอด</Fit>
        </div>
        <div className="flex flex-col pl-[121px]">
          {LINES.map((l, i) => <LineRow key={i} line={l} />)}
        </div>
      </div>
    </div>
  );
}

/* --------------------------------------------------------------- sidebar */

function Thumb({ n, on, children }: { n: string; on?: boolean } & Kids) {
  return (
    <div className="flex h-[119px] shrink-0">
      <Fit w={19} className="mr-[8px] ml-[6px] text-[18px] leading-[15px] text-[#f0f0f0]">{n}</Fit>
      <div className={"h-[119px] w-[208px] border border-[#1f1f1f] " + (on ? "outline-[3px] -outline-offset-1 outline-[#d24726]" : "")}>
        <div className={"h-[117px] w-[206px] overflow-hidden border border-white " + SLIDE_BG}>{children}</div>
      </div>
    </div>
  );
}

function Section({ label, w }: { label: string; w: number }) {
  return (
    <div className="flex h-5 shrink-0 items-center text-[15px] leading-5 text-white">
      <svg className="mr-[10px] ml-[16px]" width="9" height="9" fill="#fff"><path d="M9 0v9H0z" /></svg>
      <Fit w={w}>{label}</Fit>
    </div>
  );
}

function RedCaption() {
  return (
    <div className="flex flex-col items-center text-[5px] leading-[7px] text-[#cf1f1f]">
      <Fit w={65}>ข้อมูลที่ใช้ในการเรียกใช้งานเมธอดในโปรแกรม</Fit>
      <Fit w={58}>และส่วนประกอบต่างๆของการประกาศเมธอด</Fit>
    </div>
  );
}

function ScrollButton({ up, className = "" }: { up?: boolean; className?: string }) {
  return (
    <div className={"flex h-[19px] w-[19px] shrink-0 items-center justify-center border border-[#3c3c3c] bg-[#999] text-[#2b2b2b] " + className}>
      <svg className={up ? "" : "rotate-180"} width="10" height="6" fill="currentColor"><path d="M0 6h10L5 0z" /></svg>
    </div>
  );
}

function Sidebar() {
  return (
    <div className="flex h-full w-[291px] shrink-0">
      <div className="flex w-[267px] flex-col overflow-hidden">
        <div className="ml-[33px] h-[19px] w-[208px] shrink-0 border border-t-0 border-[#1f1f1f]"><div className="h-[18px] border border-t-0 border-white bg-[#1b1b1c]" /></div>
        <div className="mt-[25px] mb-[12px]"><Section label="Method" w={51} /></div>
        <Thumb n="14">
          <div className="flex flex-col items-center pt-[49px]"><Fit w={24} className="text-[8.500px] leading-[12px] font-semibold text-[#e4e4e4]">เมธอด</Fit><RedCaption /></div>
        </Thumb>
        <div className="mt-[23px]">
          <Thumb n="15">
            <div className="flex flex-col pt-[4px] text-[#c4c4c4]">
              <Fit w={112} className="ml-[45px] text-[9px] leading-[12px]">เรียนเรื่องเมธอดแล้วนำเราไปสู่อะไร</Fit>
              <Fit w={90} className="mt-[2px] ml-[18px] text-[6px] leading-[10px] font-semibold">◆ ทำให้เข้าใจหน้าที่การทำงานของเมธอด</Fit>
            </div>
          </Thumb>
        </div>
        <div className="mt-[23px]">
          <Thumb n="16" on><div className="h-[795px] w-[1413px] origin-top-left scale-[0.1445]"><MainSlide mini /></div></Thumb>
        </div>
        <div className="mt-[25px] mb-[12px]"><Section label="Interface and Abstract class" w={181} /></div>
        <Thumb n="17">
          <div className="flex flex-col items-center pt-[49px]"><Fit w={127} className="text-[8.500px] leading-[12px] font-semibold text-[#e4e4e4]">อินเตอร์เฟซและแอ็บสแตร็กต์คลาส</Fit><RedCaption /></div>
        </Thumb>
        <div className="mt-[23px]">
          <Thumb n="18">
            <div className="flex flex-col pt-[4px] pl-[18px] text-[6px] leading-[7px] font-bold text-[#f21c1c]">
              <Fit w={165} className="text-[7.500px] leading-[12px] font-normal text-[#c8c8c8]">เรียนเรื่องอินเตอร์เฟซและแอ็บสแตร็กต์คลาสแล้วนำเราไปสู่อะไร</Fit>
              <div className="mt-[3px] flex text-[#c21d1d]"><span className="w-[5px] text-[5px] text-white">◆</span><Fit w={94}>ทำให้เข้าใจความหมายของอินเตอร์เฟซ</Fit></div>
              <div className="mt-[2px] flex"><span className="w-[5px] text-[5px] text-white">◆</span><Fit w={123}>ทำให้เลือกใช้อินเตอร์เฟซนำไปใช้งานได้อย่างถูกต้องเหมาะสม</Fit></div>
              <div className="mt-[3px] flex"><span className="w-[5px] text-[5px] text-white">◆</span><Fit w={153}>ทำให้เข้าใจว่าข้อมูลหนึ่งสามารถกระทำกับอีกข้อมูลหนึ่งแล้วได้ผลลัพธ์</Fit></div>
              <Fit w={158} className="ml-[5px]">ใหม่ได้ โดยการสั่งที่จะหมายดำเนินการต่างๆ และการเรียกใช้เมธอดนี้ว่า</Fit>
              <Fit w={65} className="ml-[5px]">การประมวลผล (Processing)</Fit>
            </div>
          </Thumb>
        </div>
      </div>
      <div className="mt-[2px] flex h-[827px] w-[19px] flex-col bg-[#575757]">
        <ScrollButton up />
        <div className="mt-[554px] h-[234px] border border-[#3c3c3c] bg-[#999]" />
        <ScrollButton className="mt-px" />
      </div>
      <div className="mt-[2px] ml-[4px] h-[827px] w-px bg-[#9c9c9c]" />
    </div>
  );
}

/* ------------------------------------------------------------ status bar */

function StatusBar() {
  return (
    <div className="flex h-[28px] shrink-0 items-center border-t border-b border-t-[#3f3f3f] border-b-[#8a8a8a] bg-[#595959] text-[13px] leading-5 text-white">
      <Fit w={80} className="ml-[7px]">Slide 16 of 18</Fit>
      <Ico w={18} h={15} className="mb-[2px] ml-[20px]"><path d="M8 2H1v11h7l1 1.500M9 1v13M9 2h8M10 13h7v-1" strokeWidth="1.200" /><path d="M12 5l5 5M17 5l-5 5" strokeWidth="2" /></Ico>
      <Fit w={130} className="ml-[17px]">English (United States)</Fit>
      <div className="ml-auto flex h-full items-center">
        <Ico w={14} h={14}><path d="M3 5h8L7 0z" fill="currentColor" stroke="none" /><path d="M0 7h14M0 10h14M3 13h8" strokeWidth="1.200" /></Ico>
        <Fit w={35} className="ml-[5px]">Notes</Fit>
        <Ico w={15} h={15} className="ml-[21px]"><path stroke="none" fill="#e6e6e6" d="M0 0h15v10H9l-4 5v-5H0z" /></Ico>
        <Fit w={62} className="ml-[5px]">Comments</Fit>
        <div className="ml-[19px] flex h-full w-[41px] items-center justify-center bg-[#434343]"><Ico w={14} h={13}><path d="M1 1h12v11H1zM4 1v11M4 8h9" /><path d="M7 3h4v3H7z" strokeWidth="1.300" /></Ico></div>
        <div className="flex w-[41px] justify-center"><svg width="14" height="13" fill="#f0f0f0"><path d="M0 0h6v5.500H0zM8 0h6v5.500H8zM0 7.500h6V13H0zM8 7.500h6V13H8z" /></svg></div>
        <div className="flex w-[40px] justify-center"><Ico w={14} h={14}><path d="M7 2L1 1v10l6 1 6-1V1zM7 2v12M2.500 4h3M2.500 6.500h3M2.500 9h3M8.500 4h3M8.500 6.500h3M8.500 9h3" strokeWidth="1.200" /></Ico></div>
        <div className="flex w-[41px] justify-center"><Ico w={14} h={14}><path d="M0 1h14M2 1v7h10V1M4 4h6M7 8v5M4 13h6" strokeWidth="1.200" /></Ico></div>
        <div className="ml-[6px] h-[2px] w-[10px] bg-white" />
        <div className="ml-[3px] flex w-[125px] items-center"><div className="h-px w-[53px] bg-white" /><div className="h-[14px] w-[4px] bg-white" /><div className="h-px w-[5px] bg-white" /><div className="h-[5px] w-px bg-white" /><div className="h-px flex-1 bg-white" /></div>
        <Ico w={11} h={11} className="ml-[4px]"><path d="M5.500 0v11M0 5.500h11" strokeWidth="2" /></Ico>
        <Fit w={25} className="ml-[16px]">89%</Fit>
        <Ico w={16} h={16} className="mr-[7px] ml-[16px]"><path d="M.5.500h15v15H.5z" strokeWidth="1" /><path d="M8 2v4M8 10v4M2 8h4M10 8h4M6.500 3.500L8 2l1.500 1.500M6.500 12.500L8 14l1.500-1.500M3.500 6.500L2 8l1.500 1.500M12.500 6.500L14 8l-1.500 1.500" strokeWidth="1.100" /></Ico>
      </div>
    </div>
  );
}

export default function App() {
  return (
    <div className="flex h-[1080px] w-[1920px] flex-col overflow-hidden bg-[#6a6a6a] font-['Segoe_UI','Noto_Sans','Noto_Sans_Thai','Leelawadee_UI',sans-serif]">
      <Taskbar />
      <div className="relative h-[71px] shrink-0 bg-[#444]">
        <Clouds />
        <TitleBar />
        <TabBar />
      </div>
      <div className="flex h-[112px] shrink-0 bg-[#b2b2b2]">
        <Clipboard />
        <Slides />
        <FontGroup />
        <Paragraph />
        <Drawing />
        <Editing />
        <Ico w={12} h={8} className="mt-auto mr-[11px] mb-[8px] ml-auto text-[#222]"><path d="M1 6.500l5-5 5 5" strokeWidth="2.200" /></Ico>
      </div>
      <div className="flex h-[831px] shrink-0 shadow-[inset_0_1px_0_#5f5f5f]">
        <Sidebar />
        <div className="flex h-[829px] flex-1 border-b border-[#9c9c9c]">
          <div className="mt-[11px] ml-[99px]"><MainSlide /></div>
          <div className="mt-[2px] ml-auto flex w-[20px] flex-col items-center">
            <div className="flex h-[758px] w-[20px] flex-col bg-[#575757]">
              <ScrollButton up className="w-[20px]" />
              <div className="mt-[568px] h-[38px] border border-[#3c3c3c] bg-[#999]" />
              <ScrollButton className="mt-auto w-[20px]" />
            </div>
            <svg className="mt-[7px]" width="10" height="10" fill="#2b2b2b"><path d="M0 5h10L5 0zM0 10h10L5 5z" /></svg>
            <svg className="mt-[12px]" width="10" height="10" fill="#2b2b2b"><path d="M0 0h10L5 5zM0 5h10l-5 5z" /></svg>
          </div>
        </div>
      </div>
      <StatusBar />
      <div className="absolute top-[1006px] left-[1854px] flex h-[45px] w-[45px] items-center justify-center bg-white shadow-[2px_2px_3px_#333]">
        <Ico w={18} h={14} className="text-[#1f8a45]"><path d="M1 7l5 5L17 1" strokeWidth="2" /></Ico>
      </div>
    </div>
  );
}
